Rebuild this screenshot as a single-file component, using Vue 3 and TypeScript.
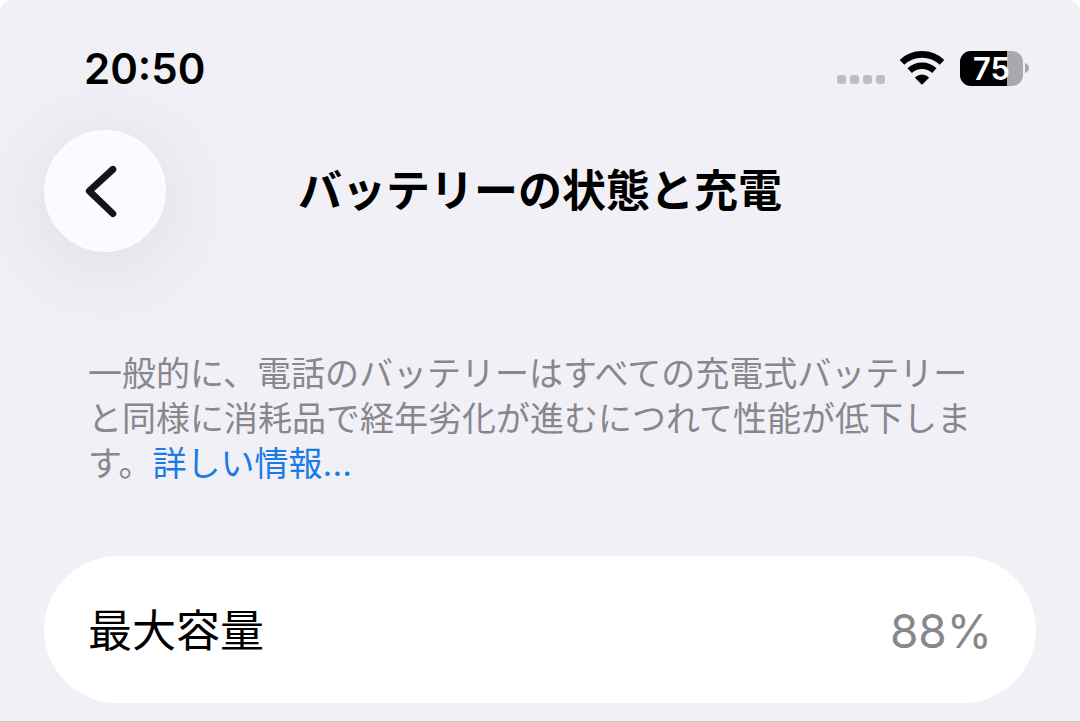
<script setup lang="ts">
import { computed, ref } from 'vue'

const time = ref<string>('20:50')
const charge = ref<number>(75)
const capacity = ref<number>(88)
const signalDots: number[] = [1, 2, 3, 4]

const chargeStyle = computed(() => ({ width: `${charge.value}%` }))
</script>

<template>
  <div class="page">
    <div class="status">
      <time class="clock">{{ time }}</time>
      <div class="indicators">
        <div class="signal">
          <span v-for="dot in signalDots" :key="dot" class="dot"></span>
        </div>
        <svg class="wifi" viewBox="0 0 138 102" aria-hidden="true">
          <path d="M9 34A88 88 0 0 1 129 34" fill="none" stroke="#000" stroke-width="20" />
          <path d="M32 59A54 54 0 0 1 106 59" fill="none" stroke="#000" stroke-width="19" />
          <path d="M69 98L51 80A27 27 0 0 1 87 80Z" stroke="#000" stroke-width="5" stroke-linejoin="round" />
        </svg>
        <div class="battery">
          <div class="cell">
            <div class="fill" :style="chargeStyle"></div>
            <span class="level">{{ charge }}</span>
          </div>
          <svg class="cap" viewBox="0 0 4 10" aria-hidden="true">
            <path d="M0 0C2 1 4 2 4 5S2 9 0 10Z" fill="#a9a9ad" />
          </svg>
        </div>
      </div>
    </div>

    <header class="header">
      <button class="back" type="button" aria-label="戻る">
        <svg viewBox="0 0 122 122" aria-hidden="true">
          <path d="M69 39L45 61L69 84" fill="none" stroke="#151519" stroke-width="7" stroke-linecap="round" stroke-linejoin="round" />
        </svg>
      </button>
      <h1 class="title">バッテリーの状態と充電</h1>
    </header>

    <main>
      <p class="note">一般的に、電話のバッテリーはすべての充電式バッテリーと同様に消耗品で経年劣化が進むにつれて性能が低下します。<a class="more" href="#">詳しい情報...</a></p>
      <dl class="card">
        <dt class="label">最大容量</dt>
        <dd class="value">{{ capacity }}%</dd>
      </dl>
    </main>
  </div>
</template>

<style>
body {
  margin: 0;
  background: #fff;
}
</style>

<style scoped>
.page {
  box-sizing: border-box;
  min-height: 100vh;
  padding: 44px 44px 18px;
  border-bottom: 1px solid #c6c6ca;
  border-radius: 12px 12px 0 0;
  background: #f1f0f6;
  color: #000;
  font-family: Inter, "Noto Sans CJK JP", sans-serif;
  overflow: hidden;
}

.status {
  display: flex;
  justify-content: space-between;
  align-items: flex-start;
  height: 50px;
  padding: 0 7px 0 40px;
}

.clock {
  font-size: 42px;
  font-weight: 600;
  line-height: 50px;
}

.indicators {
  display: flex;
  align-items: center;
  height: 48px;
}

.signal {
  display: flex;
  gap: 4px;
  margin: 22px 14px 0 0;
}

.dot {
  width: 9px;
  height: 9px;
  border-radius: 3px;
  background: #bebec2;
}

.wifi {
  width: 46px;
  height: 34px;
  margin-right: 15px;
}

.battery {
  display: flex;
  align-items: center;
  gap: 2px;
}

.cell {
  position: relative;
  display: flex;
  justify-content: center;
  width: 63px;
  height: 35px;
  border-radius: 11px;
  background: #a9a9ad;
  overflow: hidden;
}

.fill {
  position: absolute;
  top: 0;
  bottom: 0;
  left: 0;
  background: #000;
}

.level {
  position: relative;
  color: #fff;
  font-size: 31px;
  font-weight: 600;
  line-height: 35px;
}

.cap {
  width: 4px;
  height: 10px;
}

.header {
  display: grid;
  grid-template-columns: 122px 1fr 122px;
  align-items: center;
  margin-top: 36px;
}

.back {
  width: 122px;
  height: 122px;
  padding: 0;
  border: 1px solid #fff;
  border-radius: 50%;
  background: #fbfbff;
  box-shadow: 0 12px 100px rgba(20, 20, 40, 0.1);
  cursor: pointer;
}

.back svg {
  display: block;
  width: 100%;
  height: 100%;
}

.title {
  margin: 0;
  font-size: 44px;
  font-weight: 700;
  line-height: 60px;
  text-align: center;
}

.note {
  margin: 99px 44px 0;
  color: #88878d;
  font-size: 34px;
  line-height: 45px;
}

.more {
  color: #1a7be6;
  text-decoration: none;
}

.card {
  display: flex;
  justify-content: space-between;
  align-items: center;
  margin: 70px 0 0;
  padding: 45px 44px 42px;
  border-radius: 74px;
  background: #fff;
  font-size: 44px;
  line-height: 60px;
}

.label {
  font-weight: 400;
}

.value {
  margin: 0;
  color: #88888c;
  font-size: 46px;
}
</style>
